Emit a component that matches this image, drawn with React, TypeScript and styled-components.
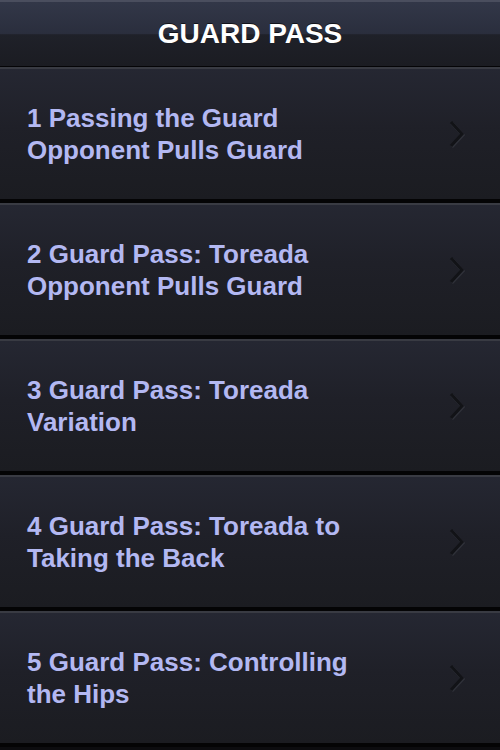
import React from "react";
import styled, { createGlobalStyle } from "styled-components";

const GlobalStyle = createGlobalStyle`
  html, body {
    margin: 0;
    padding: 0;
    background: #0c0c0f;
  }
  body {
    font-family: "Liberation Sans", Arial, sans-serif;
  }
`;

const Screen = styled.div`
  width: 500px;
  height: 750px;
  overflow: hidden;
  display: flex;
  flex-direction: column;
  background: #0c0c0f;
`;

const NavBar = styled.header`
  height: 64px;
  flex: none;
  display: flex;
  align-items: center;
  justify-content: center;
  border-top: 2px solid #4a4e5e;
  border-bottom: 1px solid #050507;
  background: linear-gradient(
    to bottom,
    #323748 0%,
    #2a2e3d 50%,
    #1f2129 51%,
    #1b1c22 100%
  );
`;

const Title = styled.h1`
  margin: 0;
  font-size: 28px;
  font-weight: bold;
  color: #ffffff;
  text-shadow: 0 -1px 0 rgba(0, 0, 0, 0.6);
`;

const List = styled.ul`
  list-style: none;
  margin: 0;
  padding: 0;
  display: flex;
  flex-direction: column;
`;

const Row = styled.li`
  height: 130px;
  flex: none;
  display: flex;
  align-items: center;
  justify-content: space-between;
  padding: 0 34px 0 27px;
  border-top: 2px solid #393b43;
  border-bottom: 4px solid #040405;
  background: linear-gradient(to bottom, #252732 0%, #1f2028 45%, #1b1c21 100%);
`;

const Label = styled.span`
  font-size: 26px;
  font-weight: bold;
  line-height: 32px;
  color: #b3b8f2;
  white-space: pre-line;
`;

// embossed disclosure arrow: dark stroke with a faint highlight below-right
const Chevron = () => (
  <svg width="18" height="30" viewBox="0 0 18 30">
    <polyline
      points="3,3 14,15 3,27"
      fill="none"
      stroke="#2f3139"
      strokeWidth="3.6"
      transform="translate(0.7,0.9)"
    />
    <polyline
      points="3,3 14,15 3,27"
      fill="none"
      stroke="#121317"
      strokeWidth="3"
    />
  </svg>
);

const items = [
  "1 Passing the Guard\nOpponent Pulls Guard",
  "2 Guard Pass: Toreada\nOpponent Pulls Guard",
  "3 Guard Pass: Toreada\nVariation",
  "4 Guard Pass: Toreada to\nTaking the Back",
  "5 Guard Pass: Controlling\nthe Hips",
];

export default function App() {
  return (
    <>
      <GlobalStyle />
      <Screen>
        <NavBar>
          <Title>GUARD PASS</Title>
        </NavBar>
        <List>
          {items.map((text) => (
            <Row key={text}>
              <Label>{text}</Label>
              <Chevron />
            </Row>
          ))}
        </List>
      </Screen>
    </>
  );
}
